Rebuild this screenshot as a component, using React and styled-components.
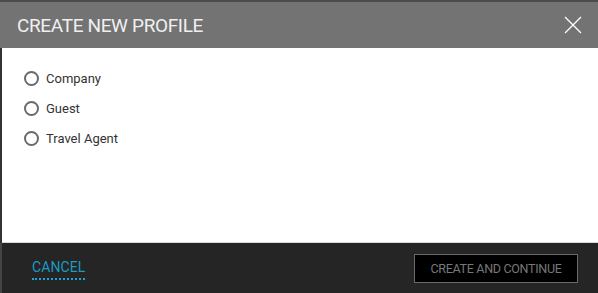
import React, { useState } from "react";
import styled, { createGlobalStyle } from "styled-components";

const Global = createGlobalStyle`
  html, body { margin: 0; padding: 0; background: #2a2a2a; }
  body { font-family: Roboto, "DejaVu Sans", sans-serif; }
  * { box-sizing: border-box; }
`;

const Frame = styled.div`
  width: 598px;
  height: 293px;
  display: flex;
  flex-direction: column;
  background: #333;
  padding-left: 2px;
  border-top: 2px solid #4b4b4b;
`;

const Header = styled.div`
  height: 46px;
  background: #737373;
  display: flex;
  align-items: center;
  justify-content: space-between;
  padding: 0 14px 0 15px;
  margin-left: -2px;
`;

const Title = styled.h1`
  margin: 0;
  font-size: 19px;
  font-weight: 400;
  color: #f0f0f0;
  letter-spacing: -0.35px;
  padding-left: 2px;
  padding-top: 1px;
`;

const CloseButton = styled.button`
  width: 22px;
  height: 22px;
  padding: 0;
  border: 0;
  background: transparent;
  display: flex;
  align-items: center;
  justify-content: center;
  cursor: pointer;
`;

const Body = styled.div`
  flex: 1;
  background: #fff;
  display: flex;
  flex-direction: column;
  padding: 15px 0 0 22px;
  border-bottom: 1px solid #d8d8d8;
`;

const Option = styled.label`
  height: 30px;
  display: flex;
  align-items: center;
  gap: 7px;
  font-size: 13px;
  color: #333;
  cursor: pointer;
`;

const RadioCircle = styled.span`
  width: 15px;
  height: 15px;
  border-radius: 50%;
  border: 2px solid ${(p) => (p.$checked ? "#1a9bc0" : "#6a6a6a")};
  display: flex;
  align-items: center;
  justify-content: center;
  &::after {
    content: "";
    width: 7px;
    height: 7px;
    border-radius: 50%;
    background: ${(p) => (p.$checked ? "#1a9bc0" : "transparent")};
  }
`;

const Footer = styled.div`
  height: 50px;
  background: #252525;
  display: flex;
  align-items: center;
  justify-content: space-between;
  padding: 0 20px 0 30px;
  margin-left: -2px;
  border-left: 2px solid #454545;
`;

const CancelLink = styled.button`
  background: transparent;
  border: 0;
  padding: 0 0 3px;
  margin-top: 2px;
  color: #1a9bc0;
  font-family: inherit;
  font-size: 14px;
  border-bottom: 2px dotted #1aa6d4;
  cursor: pointer;
  letter-spacing: 0.1px;
`;

const PrimaryButton = styled.button`
  width: 164px;
  height: 29px;
  background: #000;
  border: 1px solid #6a6a6a;
  color: #777;
  font-family: inherit;
  font-size: 12.5px;
  letter-spacing: -0.3px;
  padding: 0;
  cursor: pointer;
`;

const options = ["Company", "Guest", "Travel Agent"];

export default function App() {
  const [selected, setSelected] = useState(null);
  return (
    <>
      <Global />
      <Frame>
        <Header>
          <Title>CREATE NEW PROFILE</Title>
          <CloseButton aria-label="Close">
            <svg width="18" height="18" viewBox="0 0 18 18">
              <path d="M1 1L17 17M17 1L1 17" stroke="#fff" strokeWidth="1.3" fill="none" />
            </svg>
          </CloseButton>
        </Header>
        <Body>
          {options.map((o) => (
            <Option key={o} onClick={() => setSelected(o)}>
              <RadioCircle $checked={selected === o} />
              {o}
            </Option>
          ))}
        </Body>
        <Footer>
          <CancelLink>CANCEL</CancelLink>
          <PrimaryButton>CREATE AND CONTINUE</PrimaryButton>
        </Footer>
      </Frame>
    </>
  );
}
